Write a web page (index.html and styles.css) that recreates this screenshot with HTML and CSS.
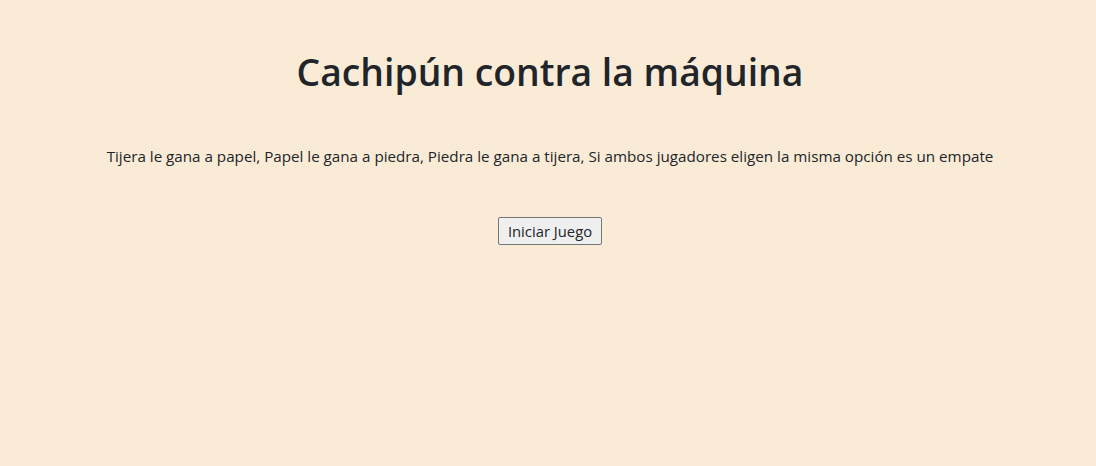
FILE: index.html
```html
<!DOCTYPE html>
<html lang="es">
<head>
<meta charset="utf-8">
<title>Cachipún</title>
<link rel="stylesheet" href="styles.css">
</head>
<body>
<main class="game">
  <h1 class="title">Cachipún contra la máquina</h1>
  <p class="rules">Tijera le gana a papel, Papel le gana a piedra, Piedra le gana a tijera, Si ambos jugadores eligen la misma opción es un empate</p>
  <button class="start" type="button">Iniciar Juego</button>
</main>
</body>
</html>
```

FILE: styles.css
```css
html, body {
  margin: 0;
  padding: 0;
  background: #faebd7;
  height: 100%;
}
body {
  font-family: "Open Sans", "Noto Sans", sans-serif;
  color: #212529;
}
.game {
  display: flex;
  flex-direction: column;
  align-items: center;
  padding: 48px 0 0 4px;
}
.title {
  margin: 0;
  font-size: 37.3px;
  font-weight: 600;
  line-height: 48px;
}
.rules {
  margin: 48px 0 0;
  font-size: 15.2px;
  line-height: 24px;
}
.start {
  margin-top: 49px;
  height: 28px;
  width: 104px;
  padding: 0;
  font-family: inherit;
  font-size: 14.8px;
  color: #212529;
  background: #efefef;
  border: 1px solid #767676;
  border-radius: 2px;
}
```
